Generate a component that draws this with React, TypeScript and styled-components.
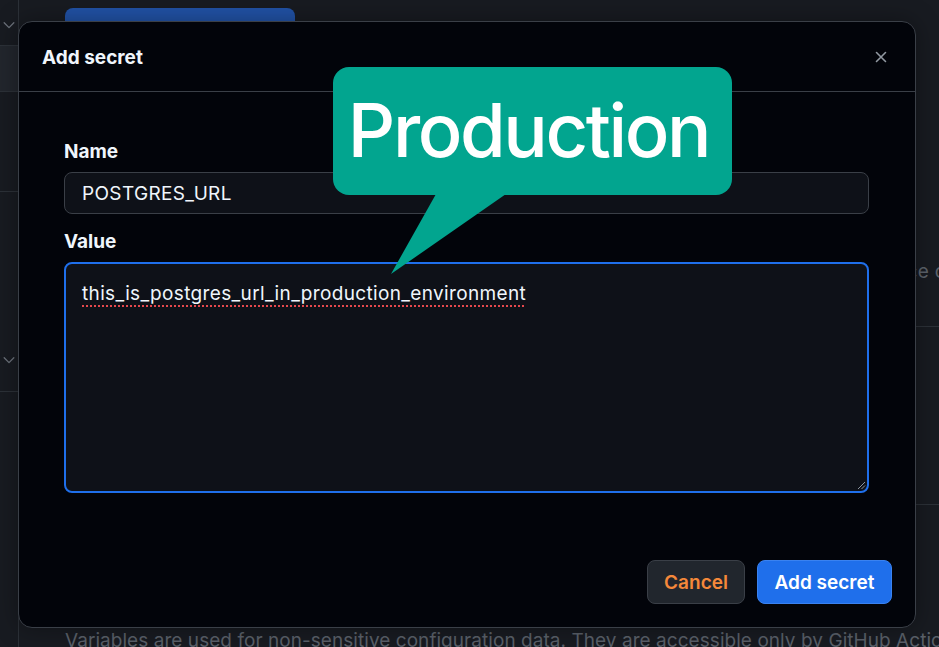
import React from "react";
import styled, { createGlobalStyle } from "styled-components";

const Global = createGlobalStyle`
  html, body { margin: 0; padding: 0; }
  body {
    width: 939px;
    height: 647px;
    overflow: hidden;
    background: #181b21;
    font-family: Inter, "Noto Sans", "Liberation Sans", sans-serif;
    -webkit-font-smoothing: antialiased;
  }
  #root { position: relative; width: 939px; height: 647px; }
`;

const Page = styled.div`
  display: flex;
  width: 939px;
  height: 647px;
  overflow: hidden;
  background: #181b21;
`;

const Sidebar = styled.div`
  width: 18px;
  flex: none;
  display: flex;
  flex-direction: column;
  border-right: 1px solid #2c3138;
`;

const SideRow = styled.div<{ $h: number; $active?: boolean; $chevronBottom?: number }>`
  height: ${(p) => p.$h}px;
  flex: none;
  box-sizing: border-box;
  border-bottom: 1px solid #2c3138;
  background: ${(p) => (p.$active ? "#22262d" : "transparent")};
  display: flex;
  align-items: ${(p) => (p.$chevronBottom !== undefined ? "flex-end" : "center")};
  justify-content: flex-end;
  padding: 4px 2px ${(p) => p.$chevronBottom ?? 0}px 0;
  color: #6b717a;
`;

const Main = styled.div`
  flex: 1;
  display: flex;
  flex-direction: column;
  padding: 8px 0 0 46px;
  min-width: 0;
`;

const BgButton = styled.div`
  width: 230px;
  height: 40px;
  border-radius: 8px;
  background: #2152a6;
  flex: none;
`;

const BgBox = styled.div`
  margin-top: 112px;
  display: flex;
  flex-direction: column;
`;

const BgBoxRow = styled.div<{ $h: number }>`
  height: ${(p) => p.$h}px;
  flex: none;
  box-sizing: border-box;
  border-bottom: 1px solid #2c3138;
  display: flex;
  align-items: flex-start;
  justify-content: flex-end;
  padding-top: 100px;
  font-size: 19px;
  line-height: 24px;
  letter-spacing: 0.35px;
  color: #5d636c;
  white-space: nowrap;
  overflow: hidden;
`;

const BgText = styled.div`
  margin-top: auto;
  margin-bottom: -6px;
  font-size: 19px;
  letter-spacing: 0.05px;
  line-height: 24px;
  color: #5a6069;
  white-space: nowrap;
`;

const Dialog = styled.div`
  position: absolute;
  left: 18px;
  top: 21px;
  width: 898px;
  height: 607px;
  box-sizing: border-box;
  background: #02040a;
  border: 1px solid #3a3f47;
  border-radius: 14px;
  display: flex;
  flex-direction: column;
  box-shadow: 0 0 24px rgba(0, 0, 0, 0.35);
`;

const Header = styled.div`
  height: 70px;
  flex: none;
  box-sizing: border-box;
  border-bottom: 1px solid #3a3f47;
  display: flex;
  align-items: center;
  justify-content: space-between;
  padding: 1px 23px 0 23px;
`;

const Title = styled.h1`
  margin: 0;
  font-size: 19px;
  font-weight: 700;
  color: #f0f6fc;
  letter-spacing: 0;
`;

const CloseButton = styled.button`
  border: none;
  background: transparent;
  padding: 0;
  width: 22px;
  height: 22px;
  display: flex;
  align-items: center;
  justify-content: center;
  color: #9198a1;
`;

const Body = styled.div`
  flex: 1;
  padding: 49px 46px 0 45px;
  display: flex;
  flex-direction: column;
`;

const Label = styled.label<{ $gap?: number; $after: number }>`
  display: block;
  font-size: 19px;
  line-height: 22px;
  font-weight: 700;
  color: #f0f6fc;
  margin-top: ${(p) => p.$gap ?? 0}px;
  margin-bottom: ${(p) => p.$after}px;
`;

const Input = styled.div`
  height: 42px;
  flex: none;
  box-sizing: border-box;
  border: 1px solid #3a3f47;
  border-radius: 8px;
  background: #0e1118;
  display: flex;
  align-items: center;
  padding: 0 17px;
  font-size: 19px;
  letter-spacing: 0.35px;
  color: #f0f6fc;
`;

const TextArea = styled.div`
  position: relative;
  height: 231px;
  flex: none;
  box-sizing: border-box;
  border: 2px solid #1f6feb;
  border-radius: 8px;
  background: #0e1118;
  padding: 18px 16px;
  font-size: 19px;
  letter-spacing: 0.35px;
  line-height: 24px;
  color: #f0f6fc;
`;

const Misspelled = styled.span`
  text-decoration: underline dotted #e5484d;
  text-decoration-thickness: 2px;
  text-underline-offset: 5px;
`;

const Grip = styled.svg`
  position: absolute;
  right: 1px;
  bottom: 1px;
`;

const Footer = styled.div`
  display: flex;
  justify-content: flex-end;
  gap: 12px;
  padding: 0 23px 23px 0;
`;

const Button = styled.button<{ $primary?: boolean }>`
  height: 44px;
  box-sizing: border-box;
  border-radius: 8px;
  padding: 0;
  font-family: inherit;
  font-size: 19px;
  font-weight: 600;
  white-space: nowrap;
  border: 1px solid ${(p) => (p.$primary ? "#3a82f0" : "#3a3f47")};
  background: ${(p) => (p.$primary ? "#1f6feb" : "#21262d")};
  color: ${(p) => (p.$primary ? "#ffffff" : "#f5883a")};
  width: ${(p) => (p.$primary ? 135 : 98)}px;
`;

const Callout = styled.div`
  position: absolute;
  left: 333px;
  top: 67px;
  width: 399px;
  height: 128px;
  border-radius: 16px;
  background: #02a58f;
  display: flex;
  align-items: center;
  justify-content: center;
  color: #ffffff;
  font-size: 74px;
  font-weight: 500;
  letter-spacing: -2.4px;
  padding: 0 8px 2px 0;
  box-sizing: border-box;
`;

const Tail = styled.svg`
  position: absolute;
  left: 380px;
  top: 194px;
`;

const Chevron = () => (
  <svg width="14" height="14" viewBox="0 0 16 16" fill="none" stroke="currentColor" strokeWidth="1.5" strokeLinecap="round" strokeLinejoin="round">
    <path d="M2.5 5.5l5.5 5.5 5.5-5.5" />
  </svg>
);

export default function App() {
  return (
    <>
      <Global />
      <Page>
        <Sidebar>
          <SideRow $h={46}>
            <Chevron />
          </SideRow>
          <SideRow $h={46} $active />
          <SideRow $h={100} />
          <SideRow $h={200} $chevronBottom={24}>
            <Chevron />
          </SideRow>
        </Sidebar>
        <Main>
          <BgButton />
          <BgBox>
            <BgBoxRow $h={167}>
              <span style={{ marginRight: -7 }}>secrets are ce c</span>
            </BgBoxRow>
            <BgBoxRow $h={178} />
          </BgBox>
          <BgText>
            Variables are used for non-sensitive configuration data. They are accessible only by GitHub Actions
          </BgText>
        </Main>
      </Page>

      <Dialog>
        <Header>
          <Title>Add secret</Title>
          <CloseButton aria-label="Close">
            <svg width="16" height="16" viewBox="0 0 16 16" fill="none" stroke="currentColor" strokeWidth="1.6" strokeLinecap="round">
              <path d="M3.5 3.5l9 9M12.5 3.5l-9 9" />
            </svg>
          </CloseButton>
        </Header>
        <Body>
          <Label $after={9}>Name</Label>
          <Input>POSTGRES_URL</Input>
          <Label $gap={17} $after={9}>Value</Label>
          <TextArea>
            <Misspelled>this_is_postgres_url_in_production_environment</Misspelled>
            <Grip width="9" height="9" viewBox="0 0 9 9" stroke="#8b949e" strokeWidth="1">
              <path d="M1 8L8 1M4.5 8L8 4.5" />
            </Grip>
          </TextArea>
        </Body>
        <Footer>
          <Button>Cancel</Button>
          <Button $primary>Add secret</Button>
        </Footer>
      </Dialog>

      <Tail width="130" height="82" viewBox="0 0 130 82">
        <polygon points="56,0 126,0 11,80" fill="#02a58f" />
      </Tail>
      <Callout>Production</Callout>
    </>
  );
}
